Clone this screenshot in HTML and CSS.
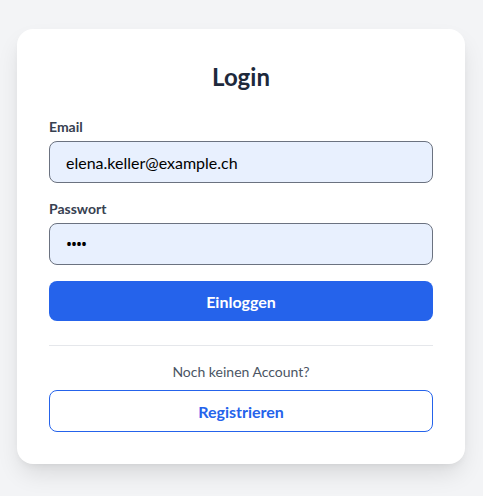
FILE: index.html
```html
<!DOCTYPE html>
<html lang="de">
<head>
<meta charset="utf-8">
<title>Login</title>
<link rel="stylesheet" href="styles.css">
</head>
<body>
<main class="page">
  <section class="card">
    <h1 class="title">Login</h1>
    <form class="form">
      <div class="field">
        <label class="label" for="email">Email</label>
        <input class="input" id="email" type="email" value="elena.keller@example.ch">
      </div>
      <div class="field">
        <label class="label" for="pw">Passwort</label>
        <input class="input input-password" id="pw" type="password" value="abcd">
      </div>
      <button class="btn-primary" type="button">Einloggen</button>
    </form>
    <hr class="divider">
    <p class="hint">Noch keinen Account?</p>
    <button class="btn-outline" type="button">Registrieren</button>
  </section>
</main>
</body>
</html>
```

FILE: styles.css
```css
* { box-sizing: border-box; }
html, body { margin: 0; padding: 0; }
body {
  background: #f3f4f6;
  font-family: "Lato", "Noto Sans", sans-serif;
  color: #1f2937;
}
.page {
  min-height: 496px;
  display: flex;
  justify-content: center;
  align-items: flex-start;
  padding: 29px 1px 0 0;
}
.card {
  width: 448px;
  background: #fff;
  border-radius: 16px;
  padding: 32px;
  box-shadow: 0 12px 24px -4px rgba(0,0,0,0.12), 0 4px 8px -4px rgba(0,0,0,0.08);
}
.title {
  margin: 0 0 24px;
  text-align: center;
  font-size: 24px;
  line-height: 32px;
  font-weight: 700;
  color: #1e293b;
}
.form { display: flex; flex-direction: column; gap: 16px; }
.field { display: flex; flex-direction: column; gap: 4px; }
.label {
  font-size: 14px;
  line-height: 20px;
  font-weight: 700;
  color: #374151;
}
.input {
  height: 42px;
  border: 1px solid #6b7280;
  border-radius: 8px;
  background: #e8f0fe;
  padding: 0 16px;
  font-family: inherit;
  font-size: 16px;
  color: #000;
  outline: none;
}
.input-password {
  font-family: "Noto Sans", sans-serif;
  letter-spacing: -1px;
}
.btn-primary {
  height: 40px;
  border: none;
  border-radius: 8px;
  background: #2563eb;
  color: #fff;
  font-family: inherit;
  font-size: 16px;
  font-weight: 700;
}
.divider {
  border: none;
  border-top: 1px solid #e5e7eb;
  margin: 24px 0 16px;
}
.hint {
  margin: 0 0 8px;
  text-align: center;
  font-size: 14px;
  line-height: 20px;
  color: #4b5563;
}
.btn-outline {
  width: 100%;
  height: 42px;
  border: 1px solid #2563eb;
  border-radius: 8px;
  background: #fff;
  color: #2563eb;
  font-family: inherit;
  font-size: 16px;
  font-weight: 700;
}
```
